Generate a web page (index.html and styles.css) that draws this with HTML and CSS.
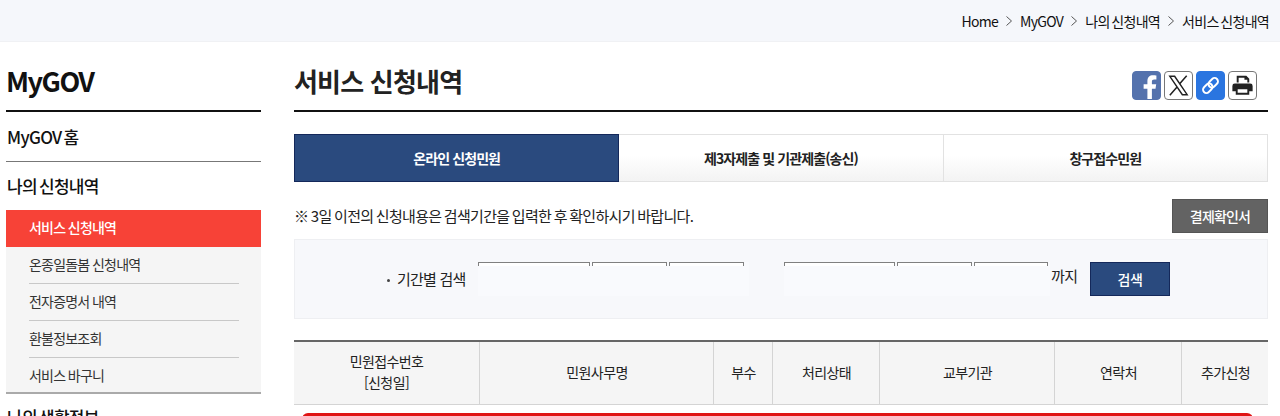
FILE: index.html
```html
<!DOCTYPE html>
<html lang="ko">
<head>
<meta charset="utf-8">
<title>서비스 신청내역</title>
<link rel="stylesheet" href="styles.css">
</head>
<body>
<header class="topbar">
  <nav class="crumbs">
    <span>Home</span><svg class="chev" viewBox="0 0 8 12"><path d="M1.5 1.5 6.5 6l-5 4.5"/></svg>
    <span>MyGOV</span><svg class="chev" viewBox="0 0 8 12"><path d="M1.5 1.5 6.5 6l-5 4.5"/></svg>
    <span>나의 신청내역</span><svg class="chev" viewBox="0 0 8 12"><path d="M1.5 1.5 6.5 6l-5 4.5"/></svg>
    <span>서비스 신청내역</span>
  </nav>
</header>
<div class="page">
  <aside class="side">
    <h2 class="side-title">MyGOV</h2>
    <div class="side-head first">MyGOV 홈</div>
    <div class="side-head">나의 신청내역</div>
    <ul class="side-list">
      <li class="active">서비스 신청내역</li>
      <li>온종일돌봄 신청내역</li>
      <li>전자증명서 내역</li>
      <li>환불정보조회</li>
      <li>서비스 바구니</li>
    </ul>
    <div class="side-head last">나의 생활정보</div>
  </aside>
  <main class="main">
    <div class="title-row">
      <h1>서비스 신청내역</h1>
      <div class="shares">
        <span class="share fb"><svg viewBox="0 0 30 30"><path fill="#fff" d="M21 30V18.500h4l.8-4.800H21v-3c0-1.500.7-2.500 2.700-2.500H26V4c-.8-.1-2.200-.3-3.800-.3-3.700 0-6.200 2.200-6.200 6.400v3.600h-4.200v4.800H16V30z"/></svg></span>
        <span class="share"><svg viewBox="0 0 28 28"><path fill="none" stroke="#222" stroke-width="1.500" d="M5 4.500h5l13 19h-5z"/><path fill="none" stroke="#222" stroke-width="1.600" d="M22.500 4 15 12.500M12.500 15.500 5 24"/></svg></span>
        <span class="share link"><svg viewBox="0 0 28 28"><g fill="none" stroke="#fff" stroke-width="2" transform="rotate(-45 14 14)"><rect x="4.500" y="10.500" width="11" height="7" rx="3.500"/><rect x="12.500" y="10.500" width="11" height="7" rx="3.500"/></g></svg></span>
        <span class="share"><svg viewBox="0 0 28 28"><path fill="#222" d="M8 4h10l3 3v4h-2V8h-3V6H10v5H8z"/><path fill="#222" fill-rule="evenodd" d="M6 12h16a2.500 2.500 0 0 1 2.500 2.500V20H21v3.500H7V20H3.500v-5.500A2.500 2.500 0 0 1 6 12zm3 6v3.500h10V18z"/></svg></span>
      </div>
    </div>
    <div class="tabs">
      <div class="tab on">온라인 신청민원</div>
      <div class="tab">제3자제출 및 기관제출(송신)</div>
      <div class="tab">창구접수민원</div>
    </div>
    <div class="notice-row">
      <p>※ 3일 이전의 신청내용은 검색기간을 입력한 후 확인하시기 바랍니다.</p>
      <span class="btn-gray">결제확인서</span>
    </div>
    <div class="search">
      <span class="search-label">기간별 검색</span>
      <div class="fields">
        <span class="field y"></span><span class="field m"></span><span class="field d"></span>
      </div>
      <div class="fields second">
        <span class="field y"></span><span class="field m"></span><span class="field d"></span>
      </div>
      <span class="until">까지</span>
      <span class="btn-blue">검색</span>
    </div>
    <div class="thead">
      <div class="c1">민원접수번호<br>[신청일]</div>
      <div class="c2">민원사무명</div>
      <div class="c3">부수</div>
      <div class="c4">처리상태</div>
      <div class="c5">교부기관</div>
      <div class="c6">연락처</div>
      <div class="c7">추가신청</div>
    </div>
    <div class="redbar"></div>
  </main>
</div>
</body>
</html>
```

FILE: styles.css
```css
* { box-sizing: border-box; }
html, body { margin: 0; padding: 0; height: 416px; overflow: hidden; background: #fff; }
body { font-family: "Noto Sans CJK KR", "Noto Sans", sans-serif; color: #111; }
ul, p, h1, h2 { margin: 0; padding: 0; }
ul { list-style: none; }

.topbar { height: 42px; background: #f5f7fb; border-bottom: 1px solid #f0f1f4; display: flex; justify-content: flex-end; align-items: center; padding-right: 11px; }
.crumbs { display: flex; align-items: center; font-size: 14px; letter-spacing: -0.7px; word-spacing: -1.5px; color: #111; }
.chev { width: 8px; height: 12px; margin: 0 7px; fill: none; stroke: #555; stroke-width: 1; }

.page { display: flex; padding-left: 6px; }
.side { width: 255px; flex: none; margin-right: 33px; }
.side-title { height: 70px; border-bottom: 2px solid #111; font-size: 27px; font-weight: 700; line-height: 40px; padding-top: 19px; letter-spacing: -1.5px; }
.side-head { font-size: 17px; font-weight: 500; letter-spacing: -0.7px; word-spacing: -2px; height: 48px; line-height: 48px; padding-left: 1px; }
.side-head.first { height: 50px; line-height: 50px; border-bottom: 1px solid #777; }
.side-head.last { height: 44px; line-height: 46px; }
.side-list { background: #f5f5f5; border-bottom: 2px solid #aaa; }
.side-list li { height: 37px; line-height: 35px; font-size: 14px; letter-spacing: -0.8px; word-spacing: -0.5px; color: #333; margin: 0 22px 0 23px; border-bottom: 1px solid #c8c8c8; }
.side-list li:last-child { border-bottom: 0; height: 34px; }
.side-list li.active { margin: 0; padding-left: 23px; background: #f74237; color: #fff; border-bottom: 0; font-weight: 500; }

.main { width: 974px; flex: none; }
.title-row { height: 70px; border-bottom: 2px solid #111; display: flex; justify-content: space-between; align-items: flex-start; }
.title-row h1 { font-size: 26px; font-weight: 700; letter-spacing: -0.8px; line-height: 38px; padding-top: 20px; color: #222; }
.shares { display: flex; gap: 3px; padding: 29px 11px 0 0; }
.share { width: 29px; height: 29px; border: 1px solid #777; border-radius: 4px; background: #fff; display: flex; overflow: hidden; }
.share svg { width: 100%; height: 100%; display: block; }
.share.fb { background: #5472ad; border-color: #5472ad; }
.share.link { background: #2a75e0; border-color: #2a75e0; }

.tabs { display: flex; margin-top: 22px; height: 48px; }
.tab { flex: 1; display: flex; align-items: center; justify-content: center; font-size: 14px; font-weight: 700; letter-spacing: -0.9px; background: linear-gradient(#fff 45%, #f3f3f3); border: 1px solid #e2e2e2; border-left: 0; color: #222; }
.tab.on { background: #2a4a7e; border: 1px solid #14285a; color: #fff; }

.notice-row { display: flex; justify-content: space-between; align-items: center; margin-top: 17px; height: 34px; }
.notice-row p { font-size: 15px; letter-spacing: -0.7px; word-spacing: -1px; color: #222; padding-bottom: 2px; }
.btn-gray { width: 96px; height: 34px; background: #636363; border: 1px solid #555; color: #fff; font-size: 14px; font-weight: 500; letter-spacing: -0.8px; display: flex; align-items: center; justify-content: center; }

.search { margin-top: 6px; height: 80px; background: #f7f8fb; border: 1px solid #eeeff2; display: flex; align-items: flex-start; }
.search-label { font-size: 15px; letter-spacing: -0.8px; margin: 28px 12px 0 102px; color: #222; position: relative; width: 69px; white-space: nowrap; }
.search-label::before { content: ""; position: absolute; left: -10px; top: 11px; width: 3px; height: 3px; border-radius: 50%; background: #444; }
.fields { display: flex; margin-top: 22px; background: #f9fafd; height: 34px; width: 271px; }
.fields.second { margin-left: 35px; width: 266px; }
.field { height: 4px; border: 1px solid #808080; border-bottom: 0; margin-right: 2px; background: #fff; }
.field.y { width: 112px; }
.field.m { width: 75px; }
.field.d { width: 75px; }
.until { font-size: 15px; letter-spacing: -0.5px; margin: 25px 0 0 1px; width: 39px; color: #222; }
.btn-blue { width: 80px; height: 34px; margin-top: 22px; background: #2a4a7e; border: 1px solid #14285a; color: #fff; font-size: 14px; font-weight: 500; display: flex; align-items: center; justify-content: center; letter-spacing: -0.5px; }

.thead { margin-top: 21px; height: 65px; display: flex; background: #f5f5f5; border-top: 2px solid #666; border-bottom: 1px solid #d4d4d4; font-size: 14px; letter-spacing: -0.6px; color: #222; }
.thead > div { flex: none; display: flex; align-items: center; justify-content: center; text-align: center; line-height: 21px; padding-bottom: 2px; border-right: 1px solid #d4d4d4; margin-right: 1px; }
.thead > div:last-child { border-right: 0; margin-right: 0; }
.c1 { width: 186px; }
.c2 { width: 233px; }
.c3 { width: 58px; }
.c4 { width: 106px; }
.c5 { width: 174px; }
.c6 { width: 126px; }
.c7 { width: 85px; }
.redbar { margin: 8px 15px 0 8px; height: 40px; background: #e01414; border-radius: 6px 6px 0 0; }
```
